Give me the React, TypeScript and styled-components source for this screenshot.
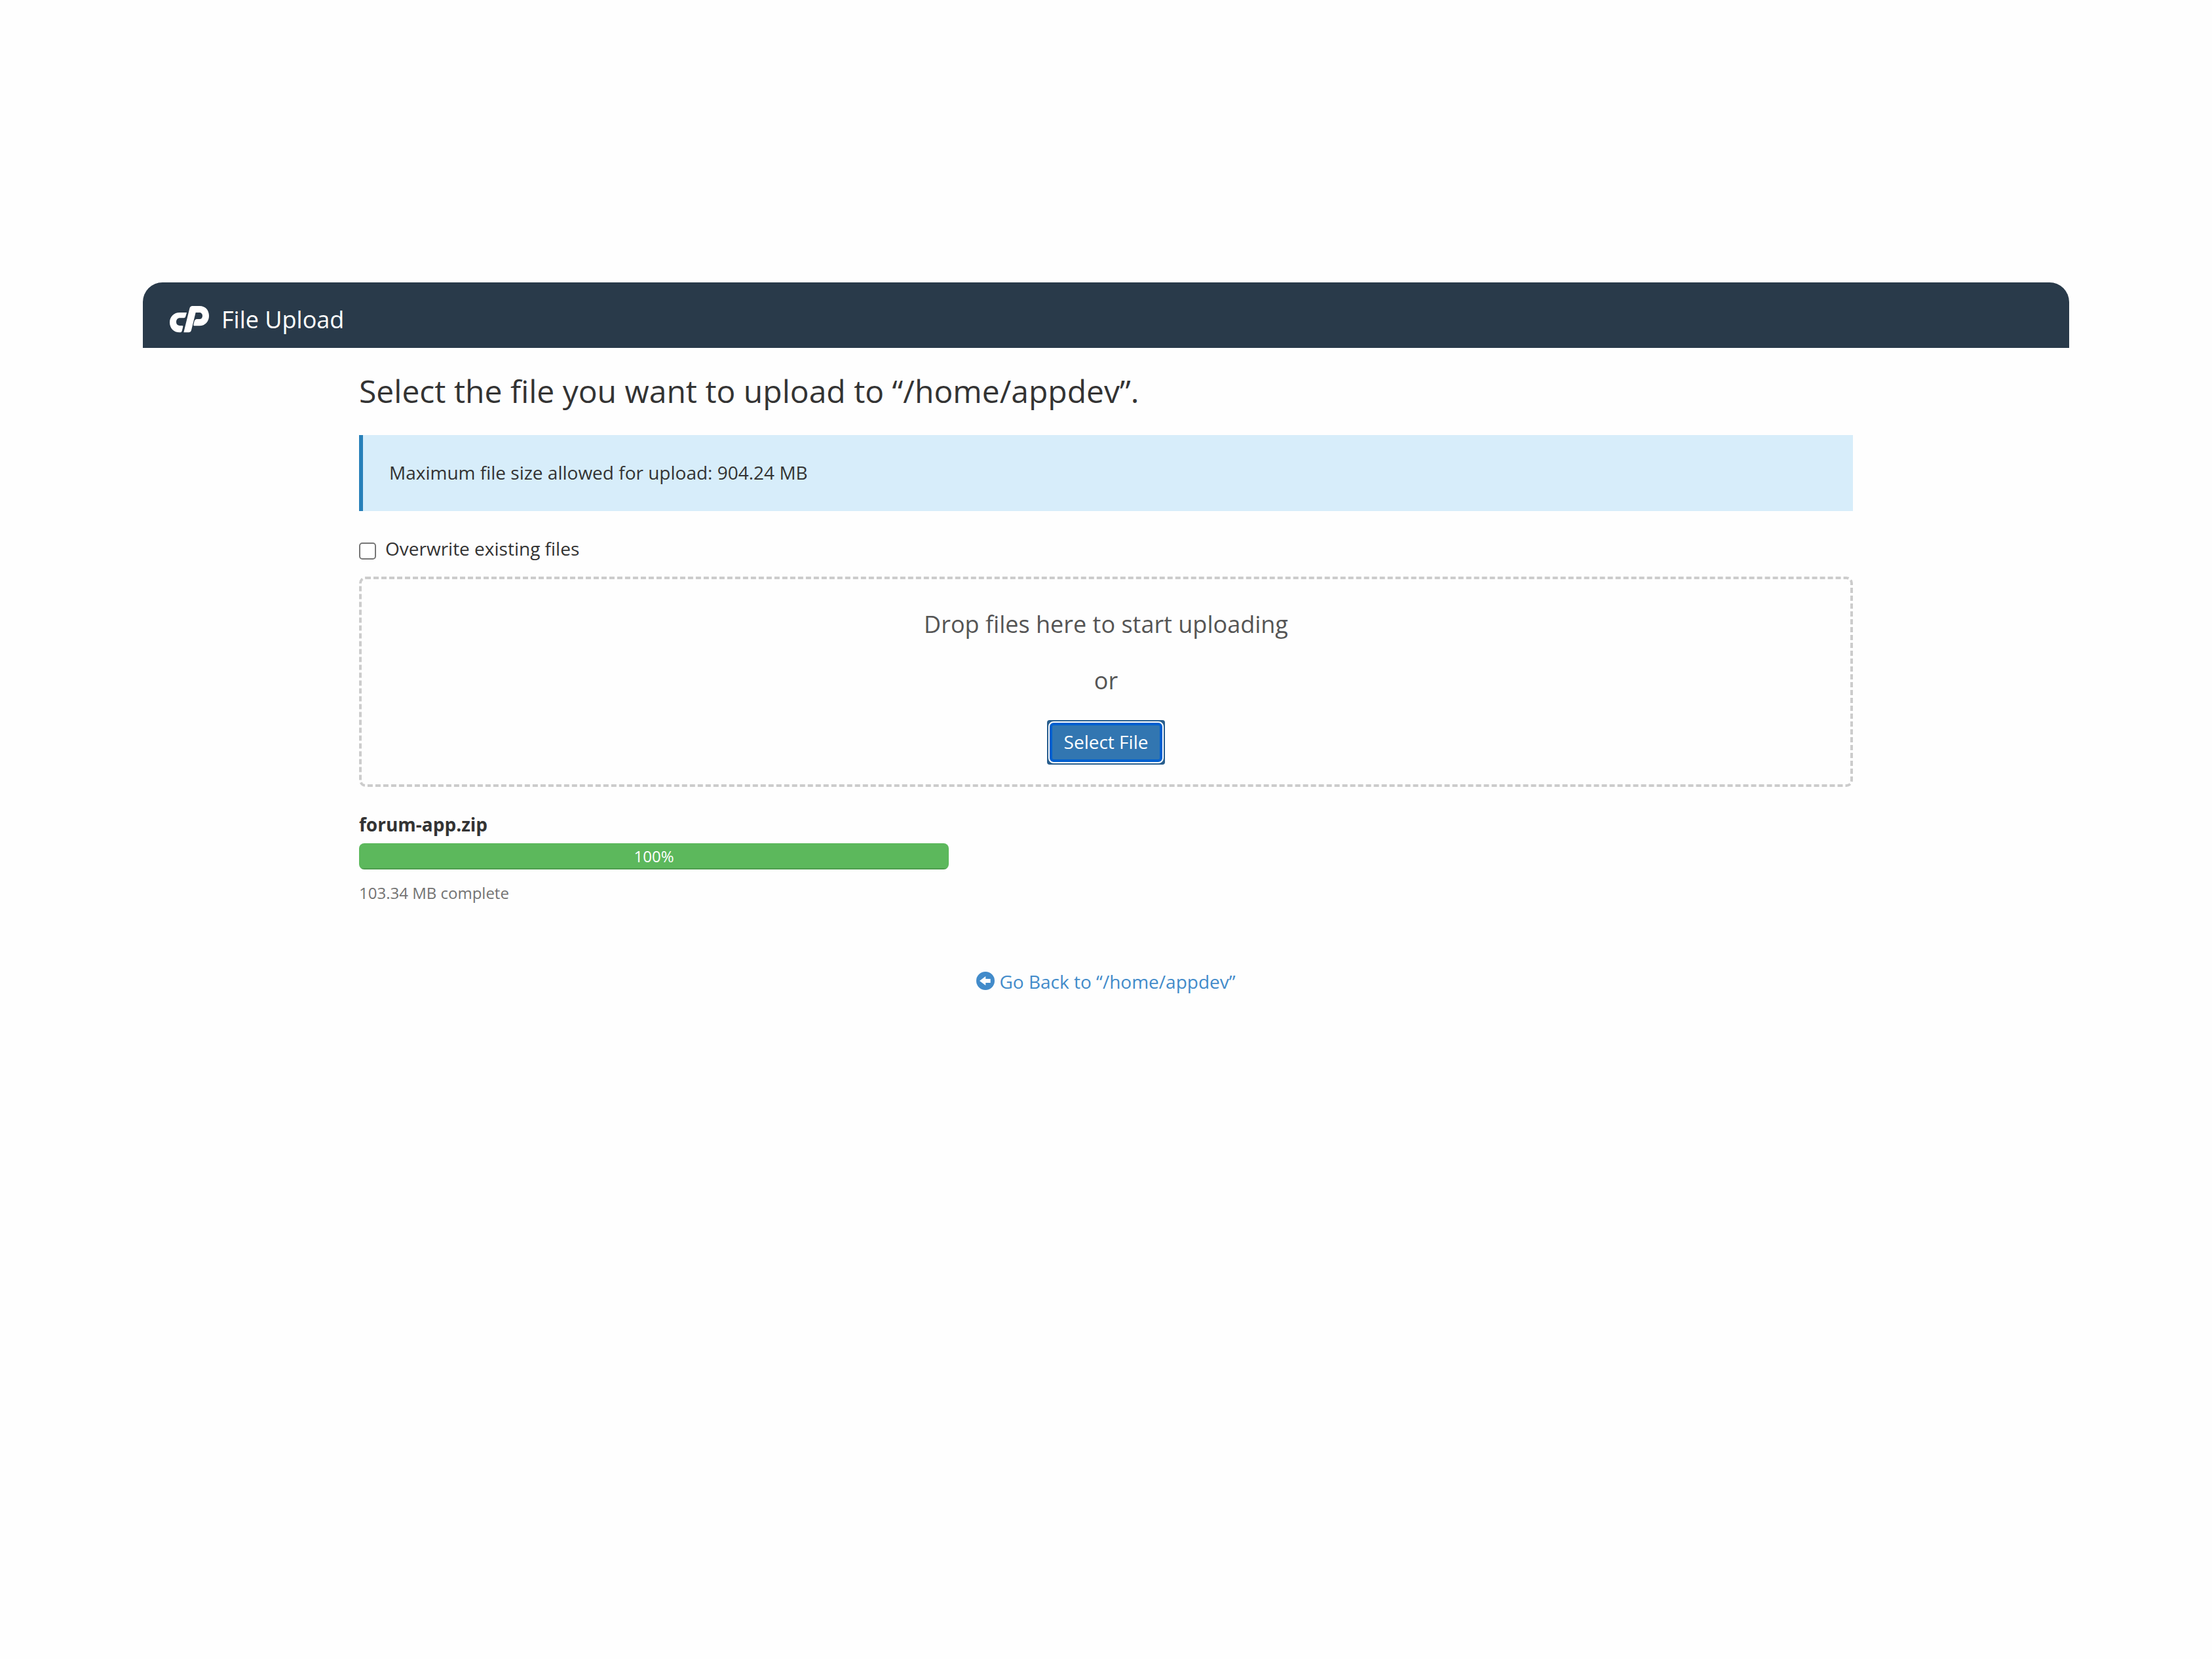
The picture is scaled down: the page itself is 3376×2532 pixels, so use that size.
import React, { useState } from "react";
import styled, { createGlobalStyle } from "styled-components";

const GlobalStyle = createGlobalStyle`
  *, *::before, *::after { box-sizing: border-box; }
  body {
    margin: 0;
    background: #fefefe;
    color: #333;
    font-family: "Open Sans", "Noto Sans", sans-serif;
    font-size: 28px;
    line-height: 40px;
  }
`;

const Page = styled.div`
  padding: 431px 218px 80px;
`;

const TopBar = styled.header`
  display: flex;
  align-items: center;
  gap: 18px;
  height: 100px;
  padding: 14px 40px 0;
  border-radius: 30px 30px 0 0;
  background: #293a4a;
  color: #fff;
`;

const AppTitle = styled.span`
  font-size: 36px;
  line-height: 50px;
`;

const Content = styled.main`
  display: flex;
  flex-direction: column;
  max-width: 2280px;
  margin: 0 auto;
  padding-top: 40px;
`;

const Heading = styled.h1`
  margin: 0 0 41px;
  font-size: 48px;
  font-weight: 400;
  line-height: 52px;
`;

const Notice = styled.div`
  padding: 37px 40px 39px;
  border-left: 6px solid #2780b9;
  background: #d7edfa;
`;

const CheckLabel = styled.label`
  display: flex;
  align-items: center;
  align-self: flex-start;
  gap: 14px;
  margin: 37px 0 23px;
`;

const Checkbox = styled.input`
  appearance: none;
  width: 26px;
  height: 26px;
  margin: 8px 0 0;
  border: 2px solid #767676;
  border-radius: 5px;
  background: #fff;

  &:checked {
    border-color: #0060d0;
    background: #0060d0;
  }
`;

const DropZone = styled.section`
  display: flex;
  flex-direction: column;
  align-items: center;
  gap: 34px;
  padding: 43px 30px 30px;
  border: 4px dashed #ccc;
  border-radius: 10px;
`;

const DropText = styled.p`
  margin: 0;
  color: #555;
  font-size: 36px;
  line-height: 52px;
`;

const SelectButton = styled.button`
  padding: 2px;
  border: 0;
  border-radius: 4px;
  background: #285e8e;
  color: #fff;
  font: inherit;
  cursor: pointer;
`;

const ButtonFace = styled.span`
  display: block;
  padding: 9px 22px 11px;
  border: 2px solid #fff;
  border-radius: 8px;
  background: #3276b1;
  box-shadow: inset 0 0 0 4px #0060d0;
`;

const Upload = styled.section`
  display: flex;
  flex-direction: column;
  max-width: 900px;
  margin-top: 37px;
`;

const FileName = styled.strong`
  font-weight: 700;
`;

const Track = styled.div`
  height: 40px;
  margin: 9px 0 18px;
  overflow: hidden;
  border-radius: 8px;
  background: #f5f5f5;
`;

const Bar = styled.div`
  height: 100%;
  background: #5cb85c;
  box-shadow: inset 0 -2px 0 rgba(0, 0, 0, 0.15);
  color: #fff;
  font-size: 24px;
  line-height: 40px;
  text-align: center;
`;

const Status = styled.span`
  color: #737373;
  font-size: 24px;
  line-height: 36px;
`;

const BackLink = styled.a`
  display: flex;
  align-items: center;
  align-self: center;
  gap: 7px;
  margin-top: 97px;
  color: #428bca;
  text-decoration: none;

  svg { margin-bottom: 2px; }
`;

function Logo() {
  return (
    <svg width="62" height="42" viewBox="-3 0 186 126" aria-hidden="true">
      <path
        fill="currentColor"
        d="M45 30H78L73 47Q71 55 62 55H47C36 55 30 63 30 73C30 84 37 90 46 90H58Q62 90 61 95L56 115Q54 121 49 121H45C18 121 0 101 0 75C0 49 20 30 45 30Z"
      />
      <path
        fill="currentColor"
        d="M64 121L91 11Q94 0 104 0H137C164 0 180 20 180 45C180 71 162 91 136 91H113Q108 91 109 86L112 73Q115 60 125 60H136C145 60 150 54 150 45C150 36 144 30 135 30H119L99 111Q96 121 87 121Z"
      />
    </svg>
  );
}

function BackIcon() {
  return (
    <svg width="28" height="28" viewBox="0 0 28 28" aria-hidden="true">
      <path
        fill="currentColor"
        fillRule="evenodd"
        d="M14 0a14 14 0 1 1 0 28a14 14 0 0 1 0-28zM5 14L14.3 21V17H21.7V11H14.3V7z"
      />
    </svg>
  );
}

const upload = { name: "forum-app.zip", percent: 100, size: "103.34 MB" };
const directory = "/home/appdev";

export default function App() {
  const [overwrite, setOverwrite] = useState(false);

  return (
    <>
      <GlobalStyle />
      <Page>
        <TopBar>
          <Logo />
          <AppTitle>File Upload</AppTitle>
        </TopBar>
        <Content>
          <Heading>Select the file you want to upload to “{directory}”.</Heading>
          <Notice>Maximum file size allowed for upload: 904.24 MB</Notice>
          <CheckLabel htmlFor="overwrite">
            <Checkbox
              id="overwrite"
              type="checkbox"
              checked={overwrite}
              onChange={(event) => setOverwrite(event.target.checked)}
            />
            Overwrite existing files
          </CheckLabel>
          <DropZone>
            <DropText>Drop files here to start uploading</DropText>
            <DropText>or</DropText>
            <SelectButton type="button">
              <ButtonFace>Select File</ButtonFace>
            </SelectButton>
          </DropZone>
          <Upload>
            <FileName>{upload.name}</FileName>
            <Track>
              <Bar
                role="progressbar"
                aria-label={upload.name}
                aria-valuenow={upload.percent}
                aria-valuemin={0}
                aria-valuemax={100}
                style={{ width: `${upload.percent}%` }}
              >
                {upload.percent}%
              </Bar>
            </Track>
            <Status>{upload.size} complete</Status>
          </Upload>
          <BackLink href="#back">
            <BackIcon />
            <span>Go Back to “{directory}”</span>
          </BackLink>
        </Content>
      </Page>
    </>
  );
}
